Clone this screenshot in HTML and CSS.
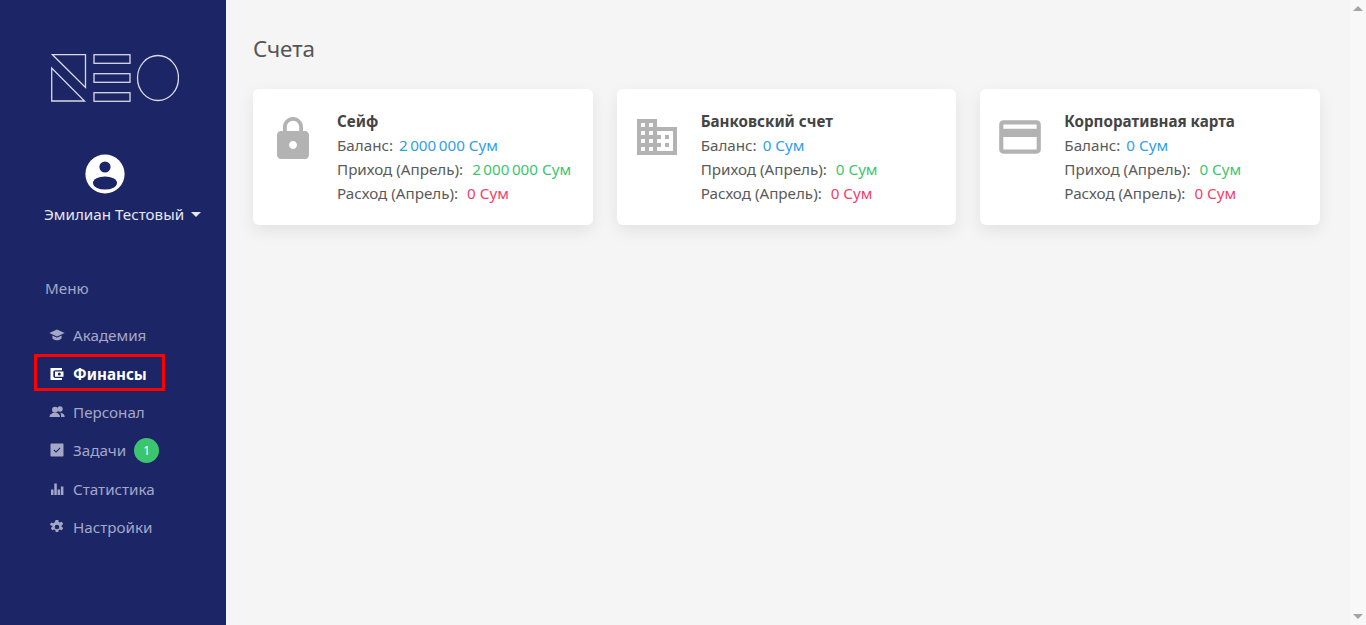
FILE: index.html
```html
<!DOCTYPE html>
<html lang="ru">
<head>
<meta charset="utf-8">
<title>Счета</title>
<link rel="stylesheet" href="styles.css">
</head>
<body>
<div class="app">
  <aside class="sidebar">
    <svg class="logo" width="128" height="48" viewBox="0 0 128 48" fill="none" stroke="#d9dae6" stroke-width="1.3">
      <path d="M1.5 .7H34.500V33.500Z"/>
      <path d="M.7 14V47H33.500Z"/>
      <rect x="43" y=".7" width="36" height="8.600"/>
      <rect x="43" y="19.700" width="36" height="8.600"/>
      <rect x="43" y="38.700" width="36" height="8.600"/>
      <ellipse cx="107" cy="24" rx="20.500" ry="22.500"/>
    </svg>
    <div class="user">
      <svg class="avatar" width="40" height="40" viewBox="0 0 40 40">
        <circle cx="20" cy="20" r="19.600" fill="#fff"/>
        <circle cx="20" cy="13" r="5.600" fill="#1c2566"/>
        <ellipse cx="20" cy="29" rx="12" ry="6.600" fill="#1c2566"/>
      </svg>
      <div class="user-name">Эмилиан Тестовый <span class="caret"></span></div>
    </div>
    <div class="menu-title">Меню</div>
    <nav class="menu">
      <a class="item">
        <svg class="ico" viewBox="0 0 16 16"><path d="M8 2.500 .3 6 8 9.600 15.700 6Z"/><path d="M3.400 8.600v2.600C4.600 12.600 6.200 13.300 8 13.300s3.400-.7 4.600-2.100V8.600L8 10.800Z"/></svg>
        <span>Академия</span>
      </a>
      <a class="item active">
        <svg class="ico" viewBox="0 0 16 16"><path d="M1.500 2H13v2.300H6.500C5 4.300 4.300 5 4.300 6.500v3.200C4.300 11 5 12 6.500 12H13v2H1.500Z"/><path fill-rule="evenodd" d="M6 5.400h8.500v5.300H6ZM10.300 6.500a1.500 1.500 0 1 0 0 3 1.500 1.500 0 0 0 0-3Z"/></svg>
        <span>Финансы</span>
      </a>
      <a class="item">
        <svg class="ico" viewBox="0 0 16 16"><circle cx="6" cy="5.800" r="3"/><circle cx="11" cy="5" r="2.700"/><path d="M.5 13c0-2.700 2.300-4.300 5.500-4.300s5 1.600 5 4.300Z"/><path d="M12 13h3.700c0-2.500-1.700-4-4.500-4.300C12 9.700 12.300 11 12 13Z"/></svg>
        <span>Персонал</span>
      </a>
      <a class="item">
        <svg class="ico" viewBox="0 0 16 16"><path fill-rule="evenodd" d="M2.500 1.500h11c.6 0 1 .4 1 1v11c0 .6-.4 1-1 1h-11c-.6 0-1-.4-1-1v-11c0-.6.4-1 1-1ZM7 10.700l4.500-4.500-.7-.7L7 9.300 5.200 7.500l-.7.7Z"/></svg>
        <span>Задачи</span>
        <span class="badge">1</span>
      </a>
      <a class="item">
        <svg class="ico" viewBox="0 0 16 16"><rect x="2" y="8.500" width="2.500" height="5.500"/><rect x="5.300" y="2.500" width="2.500" height="11.500"/><rect x="8.600" y="8.500" width="2.500" height="5.500"/><rect x="11.900" y="5.500" width="2.500" height="8.500"/></svg>
        <span>Статистика</span>
      </a>
      <a class="item">
        <svg class="ico" viewBox="0 0 16 16"><path fill-rule="evenodd" d="M6.700 1h2.600l.4 2 1.200.6 1.900-.8 1.400 2.300-1.600 1.300v1.300l1.600 1.300-1.400 2.300-1.900-.8-1.200.6-.4 2H6.700l-.4-2-1.200-.6-1.900.8-1.400-2.300 1.600-1.300V7.100L.8 5.800l1.400-2.300 1.900.8 1.200-.6ZM8 5.700a2.300 2.300 0 1 0 0 4.600 2.300 2.300 0 0 0 0-4.600Z"/></svg>
        <span>Настройки</span>
      </a>
    </nav>
  </aside>
  <main class="main">
    <h1 class="title">Счета</h1>
    <div class="cards">
      <section class="card">
        <div class="card-icon">
          <svg class="big-icon icon-lock" viewBox="0 0 24 24"><path d="M18 8h-1V6c0-2.760-2.240-5-5-5S7 3.240 7 6v2H6c-1.100 0-2 .9-2 2v10c0 1.100.9 2 2 2h12c1.100 0 2-.9 2-2V10c0-1.100-.9-2-2-2zm-6 9c-1.100 0-2-.9-2-2s.9-2 2-2 2 .9 2 2-.9 2-2 2zm3.100-9H8.900V6c0-1.710 1.390-3.100 3.100-3.100 1.710 0 3.100 1.390 3.100 3.100v2z"/></svg>
        </div>
        <div class="card-body">
          <h2 class="card-title">Сейф</h2>
          <div>Баланс: <span class="blue">2&#8201;000&#8201;000 Сум</span></div>
          <div>Приход (Апрель): <span class="green">2&#8201;000&#8201;000 Сум</span></div>
          <div>Расход (Апрель): <span class="red">0 Сум</span></div>
        </div>
      </section>
      <section class="card">
        <div class="card-icon">
          <svg class="big-icon" viewBox="0 0 24 24"><path d="M12 7V3H2v18h20V7H12zM6 19H4v-2h2v2zm0-4H4v-2h2v2zm0-4H4V9h2v2zm0-4H4V5h2v2zm4 12H8v-2h2v2zm0-4H8v-2h2v2zm0-4H8V9h2v2zm0-4H8V5h2v2zm10 12h-8v-2h2v-2h-2v-2h2v-2h-2V9h8v10zm-2-8h-2v2h2v-2zm0 4h-2v2h2v-2z"/></svg>
        </div>
        <div class="card-body">
          <h2 class="card-title">Банковский счет</h2>
          <div>Баланс: <span class="blue">0 Сум</span></div>
          <div>Приход (Апрель): <span class="green">0 Сум</span></div>
          <div>Расход (Апрель): <span class="red">0 Сум</span></div>
        </div>
      </section>
      <section class="card">
        <div class="card-icon">
          <svg class="big-icon icon-card" viewBox="0 0 24 24"><path d="M20 4H4c-1.110 0-1.990.89-1.990 2L2 18c0 1.110.89 2 2 2h16c1.110 0 2-.89 2-2V6c0-1.110-.89-2-2-2zm0 14H4v-6h16v6zm0-10H4V6h16v2z"/></svg>
        </div>
        <div class="card-body">
          <h2 class="card-title">Корпоративная карта</h2>
          <div>Баланс: <span class="blue">0 Сум</span></div>
          <div>Приход (Апрель): <span class="green">0 Сум</span></div>
          <div>Расход (Апрель): <span class="red">0 Сум</span></div>
        </div>
      </section>
    </div>
  </main>
  <div class="scrollbar">
    <span class="arrow-up"></span>
    <span class="arrow-down"></span>
  </div>
</div>
</body>
</html>
```
FILE: styles.css
```css
*, *::after { box-sizing: border-box; }
html, body { margin: 0; height: 100%; overflow: hidden; }
body { font-family: "Noto Sans", "Open Sans", sans-serif; font-size: 15.2px; color: #5a5a5a; background: #f5f5f5; }
.app { display: flex; height: 625px; }
.sidebar { width: 226px; flex: none; background: #1c2566; padding-top: 54px; display: flex; flex-direction: column; }
.logo { display: block; margin-left: 51px; }
.user { margin-top: 52px; display: flex; flex-direction: column; align-items: flex-start; }
.avatar { display: block; margin-left: 85px; }
.user-name { margin: 9px 0 0 44px; color: #e6e7f0; line-height: 22px; white-space: nowrap; }
.caret { display: inline-block; width: 0; height: 0; margin-left: 3px; vertical-align: 3px; border-left: 5px solid transparent; border-right: 5px solid transparent; border-top: 5px solid #e6e7f0; }
.menu-title { margin: 52px 0 0 45px; color: #a4a8c6; line-height: 22px; }
.menu { margin-top: 17px; padding-left: 34px; display: flex; flex-direction: column; }
.item { position: relative; display: flex; align-items: center; height: 38.4px; padding-left: 15px; color: #a4a8c6; }
.ico { width: 16px; height: 16px; fill: #a4a8c6; margin-right: 8px; flex: none; }
.item.active { color: #fff; font-weight: 700; }
.item.active .ico { fill: #fff; }
.item.active::after { content: ""; position: absolute; left: 0; top: 0; width: 131px; height: 37px; border: 3px solid #f00; }
.badge { width: 25px; height: 25px; margin-left: 8px; border-radius: 50%; background: #3cc56f; color: #fff; font-size: 12px; display: flex; align-items: center; justify-content: center; }
.main { flex: 1; padding: 34px 30px 0 27px; min-width: 0; }
.title { margin: 0; font-size: 22.4px; font-weight: 400; line-height: 29px; color: #555; }
.cards { margin-top: 26px; display: grid; grid-template-columns: repeat(3, 1fr); gap: 24px; }
.card { height: 136px; background: #fff; border-radius: 6px; box-shadow: 0 6px 16px rgba(0,0,0,.08); display: flex; }
.card-icon { width: 84px; flex: none; padding: 24px 4px 0 0; display: flex; justify-content: center; align-items: flex-start; }
.big-icon { width: 48px; height: 48px; fill: #b3b3b3; flex: none; }
.icon-lock { margin-top: 2px; }
.icon-card { width: 50px; height: 50px; margin-top: -1px; }
.card-body { padding-top: 21px; line-height: 24px; white-space: nowrap; }
.card-title { margin: 0; font-size: 15.2px; font-weight: 700; line-height: 23px; color: #444; }
.blue { color: #2f9ee8; margin-left: 2px; }
.green { color: #3cc56f; margin-left: 5px; }
.red { color: #f53d6b; margin-left: 5px; }
.scrollbar { width: 16px; flex: none; background: #f8f8f8; display: flex; flex-direction: column; justify-content: space-between; align-items: center; padding: 6px 0; }
.arrow-up { width: 0; height: 0; border-left: 5px solid transparent; border-right: 5px solid transparent; border-bottom: 5px solid #a3a3a3; }
.arrow-down { width: 0; height: 0; border-left: 5px solid transparent; border-right: 5px solid transparent; border-top: 5px solid #a3a3a3; }
```
